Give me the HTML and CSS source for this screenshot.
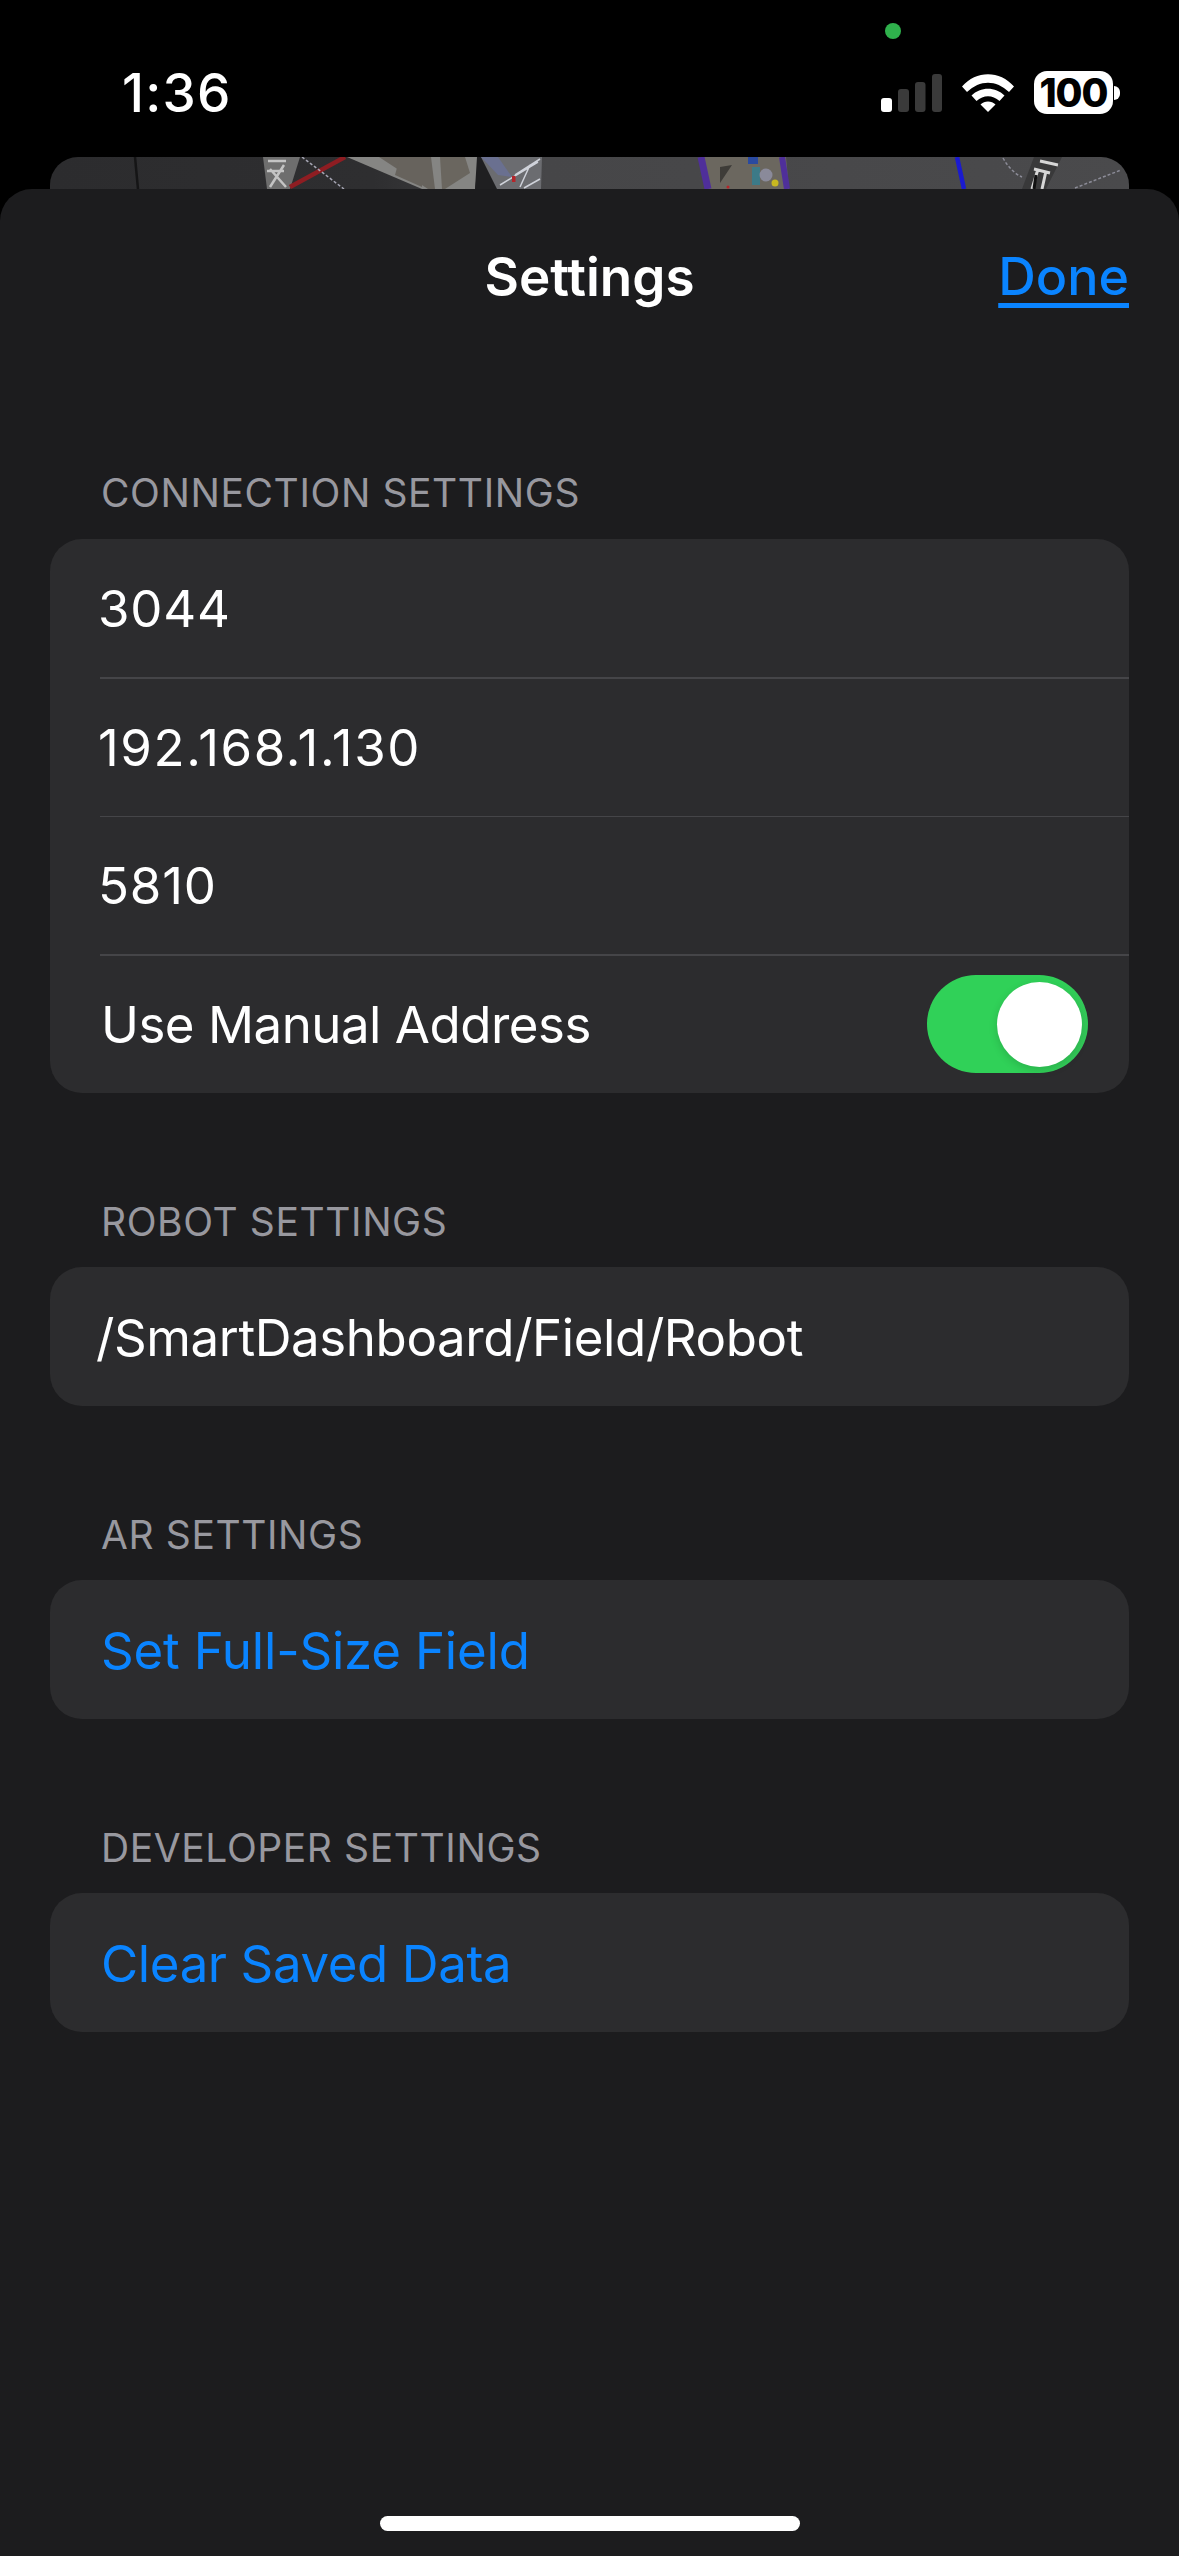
FILE: index.html
```html
<!DOCTYPE html>
<html lang="en">
<head>
<meta charset="utf-8">
<title>Settings</title>
<link rel="stylesheet" href="styles.css">
</head>
<body>
<div class="screen">
  <div class="statusbar">
    <span class="time">1:36</span>
    <span class="camdot"></span>
    <div class="status-icons">
      <svg class="signal" width="61" height="38" viewBox="0 0 61 38">
        <rect x="0" y="24" width="11" height="14" rx="3" fill="#fff"/>
        <rect x="17" y="15" width="11" height="23" rx="3" fill="#3a3a3a"/>
        <rect x="34" y="8" width="10.500" height="30" rx="3" fill="#3a3a3a"/>
        <rect x="51" y="0" width="10" height="38" rx="3" fill="#3a3a3a"/>
      </svg>
      <svg class="wifi" width="52" height="38" viewBox="0 0 52 38">
        <path d="M0 12.500 C14 -4 38 -4 52 12.500 L47 18 C34 5.500 18 5.500 5 18 Z" fill="#fff"/>
        <path d="M9.500 21.500 C18.500 12.500 33.500 12.500 42.500 21.500 L37.500 27 C30.500 20.500 21.500 20.500 14.500 27 Z" fill="#fff"/>
        <path d="M18.500 30.500 C22.500 26.500 29.500 26.500 33.500 30.500 L26 38 Z" fill="#fff"/>
      </svg>
      <div class="battery"><span class="battery-body">100</span><span class="battery-cap"></span></div>
    </div>
  </div>
  <div class="backcard">
    <svg class="scene" width="1079" height="32" viewBox="0 0 1079 32">
      <defs>
        <linearGradient id="bg" x1="0" x2="1" y1="0" y2="0">
          <stop offset="0" stop-color="#2c2c2e"/>
          <stop offset="0.3" stop-color="#2e2e30"/>
          <stop offset="0.46" stop-color="#464648"/>
          <stop offset="1" stop-color="#4a4a4c"/>
        </linearGradient>
      </defs>
      <rect width="1079" height="32" fill="url(#bg)"/>
      <path d="M85 0 L88 32" stroke="#151516" stroke-width="2.500"/>
      <path d="M213 0 H250 L240 32 H217 Z" fill="#6e6e6e"/>
      <path d="M218 4 H236 M217 14 H234 M220 30 L234 8 M220 12 L236 30" stroke="#c4c4c4" stroke-width="2.500" fill="none"/>
      <path d="M240 30 L295 0" stroke="#8e1d22" stroke-width="4.500"/>
      <path d="M252 0 L294 32" stroke="#a6a6b4" stroke-width="1.500" stroke-dasharray="3 2"/>
      <path d="M297 0 H429 L425 32 H372 Z" fill="#858583"/>
      <path d="M329 0 H381 L385 32 H378 Z" fill="#67635d"/>
      <path d="M350 0 H372 V30 L345 18 Z" fill="#67635d"/>
      <path d="M390 0 H415 L420 16 L395 32 H392 Z" fill="#6a665f"/>
      <path d="M427 0 H436 L448 32 H425 Z" fill="#1f1f21"/>
      <path d="M431 0 H492 L491 32 H447 Z" fill="#6b6c70"/>
      <path d="M431 0 H448 L462 20 L448 18 Z" fill="#6a7090"/>
      <path d="M450 28 L488 5 M465 18 L490 2 M470 30 L480 8 M474 31 L490 22" stroke="#cfd2da" stroke-width="1.500" fill="none"/>
      <rect x="462" y="19" width="3.500" height="6" fill="#b5252a"/>
      <path d="M652 0 H736 L739 32 H657 Z" fill="#6b675f"/>
      <path d="M651 0 L658 32" stroke="#4f2f9a" stroke-width="7"/>
      <path d="M732 0 L737 32" stroke="#4f2f9a" stroke-width="6"/>
      <path d="M670 26 L682 8 L670 10 Z" fill="#3e3c38"/>
      <rect x="698" y="0" width="10" height="7" fill="#2a4aa0"/>
      <rect x="702" y="10" width="8" height="18" fill="#3c7a88"/>
      <circle cx="716" cy="18" r="6.500" fill="#8a8a9a"/>
      <circle cx="725" cy="26" r="3.500" fill="#c8b820"/>
      <circle cx="678" cy="30" r="1.500" fill="#b5252a"/>
      <path d="M907 0 L914 32" stroke="#1a1ad0" stroke-width="4.500"/>
      <path d="M984 0 H1012 L996 32 H972 Z" fill="#39393a"/>
      <path d="M990 4 L1008 8 M984 12 L1000 16 M988 12 L982 32 M996 14 L992 32" stroke="#d6d6d6" stroke-width="3" fill="none"/>
      <path d="M986 18 L984 32" stroke="#111" stroke-width="3"/>
      <path d="M953 1 C958 10 965 17 972 20 M1025 31 L1071 13" stroke="#8c8c98" stroke-width="1.500" stroke-dasharray="3 2" fill="none"/>
    </svg>
  </div>
  <main class="sheet">
    <header class="nav">
      <h1 class="nav-title">Settings</h1>
      <a class="nav-done">Done</a>
    </header>
    <section class="group first">
      <h2 class="group-title">CONNECTION SETTINGS</h2>
      <div class="card">
        <div class="row field num">3044</div>
        <div class="row field num ip">192.168.1.130</div>
        <div class="row field num">5810</div>
        <div class="row label">
          <span class="row-text">Use Manual Address</span>
          <span class="toggle"><span class="knob"></span></span>
        </div>
      </div>
    </section>
    <section class="group">
      <h2 class="group-title">ROBOT SETTINGS</h2>
      <div class="card"><div class="row field path">/SmartDashboard/Field/Robot</div></div>
    </section>
    <section class="group">
      <h2 class="group-title">AR SETTINGS</h2>
      <div class="card"><div class="row label link wide">Set Full-Size Field</div></div>
    </section>
    <section class="group">
      <h2 class="group-title">DEVELOPER SETTINGS</h2>
      <div class="card"><div class="row label link">Clear Saved Data</div></div>
    </section>
    <div class="home-indicator"></div>
  </main>
</div>
</body>
</html>
```
FILE: styles.css
```css
* { box-sizing: border-box; }
html, body { margin: 0; padding: 0; background: #000; }
body { font-family: Inter, "Liberation Sans", sans-serif; color: #fff; }
.screen { width: 1179px; height: 2556px; display: flex; flex-direction: column; overflow: hidden; background: #000; }
.statusbar { height: 157px; flex: none; position: relative; display: flex; justify-content: space-between; padding: 71px 59px 0 122px; }
.time { font-size: 53px; line-height: 44px; font-weight: 500; letter-spacing: 1.2px; }
.camdot { position: absolute; left: 885px; top: 23px; width: 16px; height: 16px; border-radius: 50%; background: #2fb14c; }
.status-icons { display: flex; align-items: flex-start; gap: 20px; }
.signal { margin-top: 3px; }
.wifi { margin-top: 3px; }
.battery { display: flex; align-items: center; height: 43px; }
.battery-body { width: 79px; height: 43px; border-radius: 13px; background: #fff; color: #000; font-size: 39px; line-height: 43px; font-weight: 800; text-align: center; letter-spacing: -1px; }
.battery-cap { width: 6px; height: 14px; margin-left: 1px; background: #fff; border-radius: 0 8px 8px 0; }
.backcard { height: 32px; flex: none; margin: 0 50px; border-radius: 28px 28px 0 0; overflow: hidden; }
.scene { display: block; }
.sheet { flex: 1; position: relative; background: #1c1c1e; border-radius: 32px 32px 0 0; padding: 43px 50px 0; }
.nav { height: 90px; position: relative; display: flex; justify-content: center; align-items: center; }
.nav-title { margin: 0; font-size: 53px; line-height: 60px; font-weight: 600; }
.nav-done { position: absolute; right: 0; top: 15px; font-size: 52px; line-height: 60px; font-weight: 500; color: #0a84ff; text-decoration: underline; text-decoration-thickness: 5px; text-underline-offset: 8px; }
.group { margin-top: 107px; }
.group.first { margin-top: 149px; }
.group-title { margin: 0 0 23.500px; padding-left: 51px; font-size: 39px; line-height: 44px; font-weight: 400; color: #98989f; letter-spacing: 0.6px; }
.card { background: #2c2c2e; border-radius: 32px; overflow: hidden; }
.row { height: 138.500px; padding-top: 2px; display: flex; align-items: center; justify-content: space-between; font-size: 51px; letter-spacing: -0.4px; position: relative; }
.row + .row::before { content: ""; position: absolute; left: 50px; right: 0; top: 0; height: 1.500px; background: #454548; }
.field { padding-left: 49px; }
.num { padding-left: 48px; letter-spacing: 0.8px; }
.ip { letter-spacing: 1.6px; }
.path { padding-left: 46px; }
.label { padding-left: 51px; padding-right: 41px; }
.row-text { letter-spacing: -0.5px; }
.link { color: #0a84ff; }
.wide { letter-spacing: -0.2px; }
.toggle { width: 161px; height: 98px; border-radius: 49px; background: linear-gradient(105deg, #30d158 70%, #34c759 100%); display: flex; align-items: center; justify-content: flex-end; padding-right: 6px; }
.knob { width: 85px; height: 85px; border-radius: 50%; background: #fff; box-shadow: 0 3px 8px rgba(0,0,0,0.15); }
.home-indicator { position: absolute; left: 380px; bottom: 25px; width: 420px; height: 15px; border-radius: 8px; background: #fff; }
```
